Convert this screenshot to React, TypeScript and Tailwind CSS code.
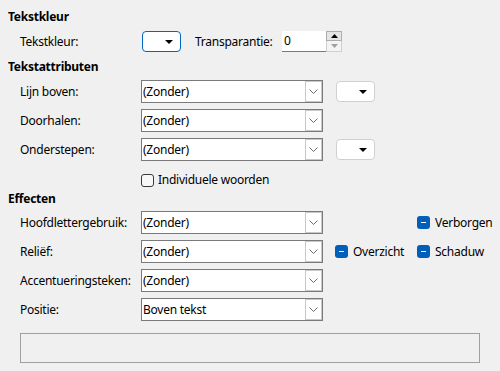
import React from "react";

function Chevron() {
  return (
    <svg width="9" height="5" viewBox="0 0 9 5" className="block">
      <path d="M0.5 0.5 L4.5 4.5 L8.5 0.5" fill="none" stroke="#6b6b6b" strokeWidth="1" />
    </svg>
  );
}

function Caret() {
  return (
    <svg width="8" height="4" viewBox="0 0 8 4" className="block">
      <path d="M0 0 H8 L4 4 Z" fill="#000" />
    </svg>
  );
}

function Select({ value }: { value: string }) {
  return (
    <div className="flex h-[23px] w-[182px] shrink-0 border border-[#7a7a7a] bg-white">
      <div className="flex flex-1 items-center pl-[1px] leading-none">{value}</div>
      <div className="flex w-[17px] items-center justify-center border border-[#c8c8c8]">
        <Chevron />
      </div>
    </div>
  );
}

function ColorButton({ focused }: { focused?: boolean }) {
  return (
    <div
      className={`flex h-[21px] w-[39px] shrink-0 items-center justify-end rounded-[4px] border bg-white pr-[7px] ${
        focused ? "border-[#0067c0]" : "border-[#d0d0d0]"
      }`}
    >
      <Caret />
    </div>
  );
}

function TriState({ label }: { label: string }) {
  return (
    <div className="flex shrink-0 items-center gap-[5px]">
      <div className="flex h-[13px] w-[13px] items-center justify-center rounded-[3px] bg-[#005fb8]">
        <div className="h-[1.5px] w-[5px] bg-white" />
      </div>
      <span>{label}</span>
    </div>
  );
}

function Row({
  label,
  value,
  children,
  className = "",
}: {
  label: string;
  value: string;
  children?: React.ReactNode;
  className?: string;
}) {
  return (
    <div className={`flex h-[23px] items-center ${className}`}>
      <div className="w-[133px] shrink-0 whitespace-nowrap pl-3">{label}</div>
      <Select value={value} />
      {children}
    </div>
  );
}

export default function App() {
  return (
    <div className="h-[371px] w-[500px] overflow-hidden bg-[#f0f0f0] pl-2 pt-2 font-['Segoe_UI','Noto_Sans',sans-serif] text-[12px] tracking-[-0.25px] text-black">
      <div className="flex h-[18px] items-center font-bold">Tekstkleur</div>
      <div className="mt-[5px] flex h-[21px] items-center">
        <div className="w-[134px] shrink-0 pl-3">Tekstkleur:</div>
        <ColorButton focused />
        <div className="ml-[14px] w-[87px] shrink-0 whitespace-nowrap">Transparantie:</div>
        <div className="flex h-[21px] shrink-0">
          <div className="flex w-[44px] items-center border-b border-[#7a7a7a] bg-white pl-[2px]">0</div>
          <div className="flex w-[16px] flex-col">
            <div className="flex h-[10px] items-center justify-center border border-[#adadad] bg-[#e5e5e5]">
              <svg width="7" height="4" viewBox="0 0 7 4">
                <path d="M0 4 H7 L3.5 0 Z" fill="#000" />
              </svg>
            </div>
            <div className="flex h-[11px] items-center justify-center border border-t-0 border-[#cfcfcf] bg-[#f4f4f4]">
              <svg width="7" height="4" viewBox="0 0 7 4">
                <path d="M0 0 H7 L3.5 4 Z" fill="#a0a0a0" />
              </svg>
            </div>
          </div>
        </div>
      </div>

      <div className="mt-[6px] flex h-[18px] items-center font-bold">Tekstattributen</div>
      <Row label="Lijn boven:" value="(Zonder)" className="mt-[4px]">
        <div className="ml-[13px]">
          <ColorButton />
        </div>
      </Row>
      <Row label="Doorhalen:" value="(Zonder)" className="mt-[6px]" />
      <Row label="Onderstepen:" value="(Zonder)" className="mt-[6px]">
        <div className="ml-[13px]">
          <ColorButton />
        </div>
      </Row>
      <div className="mt-[11px] flex h-[16px] items-center pl-[133px]">
        <div className="h-[13px] w-[13px] shrink-0 rounded-[3px] border border-[#3a3a3a] bg-[#f8f8f8]" />
        <span className="ml-[4px]">Individuele woorden</span>
      </div>

      <div className="mt-[2px] flex h-[18px] items-center font-bold">Effecten</div>
      <Row label="Hoofdlettergebruik:" value="(Zonder)" className="mt-[3px]">
        <div className="ml-[94px]">
          <TriState label="Verborgen" />
        </div>
      </Row>
      <Row label="Reliëf:" value="(Zonder)" className="mt-[6px]">
        <div className="ml-[12px] w-[82px] shrink-0">
          <TriState label="Overzicht" />
        </div>
        <TriState label="Schaduw" />
      </Row>
      <Row label="Accentueringsteken:" value="(Zonder)" className="mt-[6px]" />
      <Row label="Positie:" value="Boven tekst" className="mt-[6px]" />

      <div className="ml-3 mt-[12px] h-[30px] w-[460px] border border-[#a0a0a0]" />
    </div>
  );
}
